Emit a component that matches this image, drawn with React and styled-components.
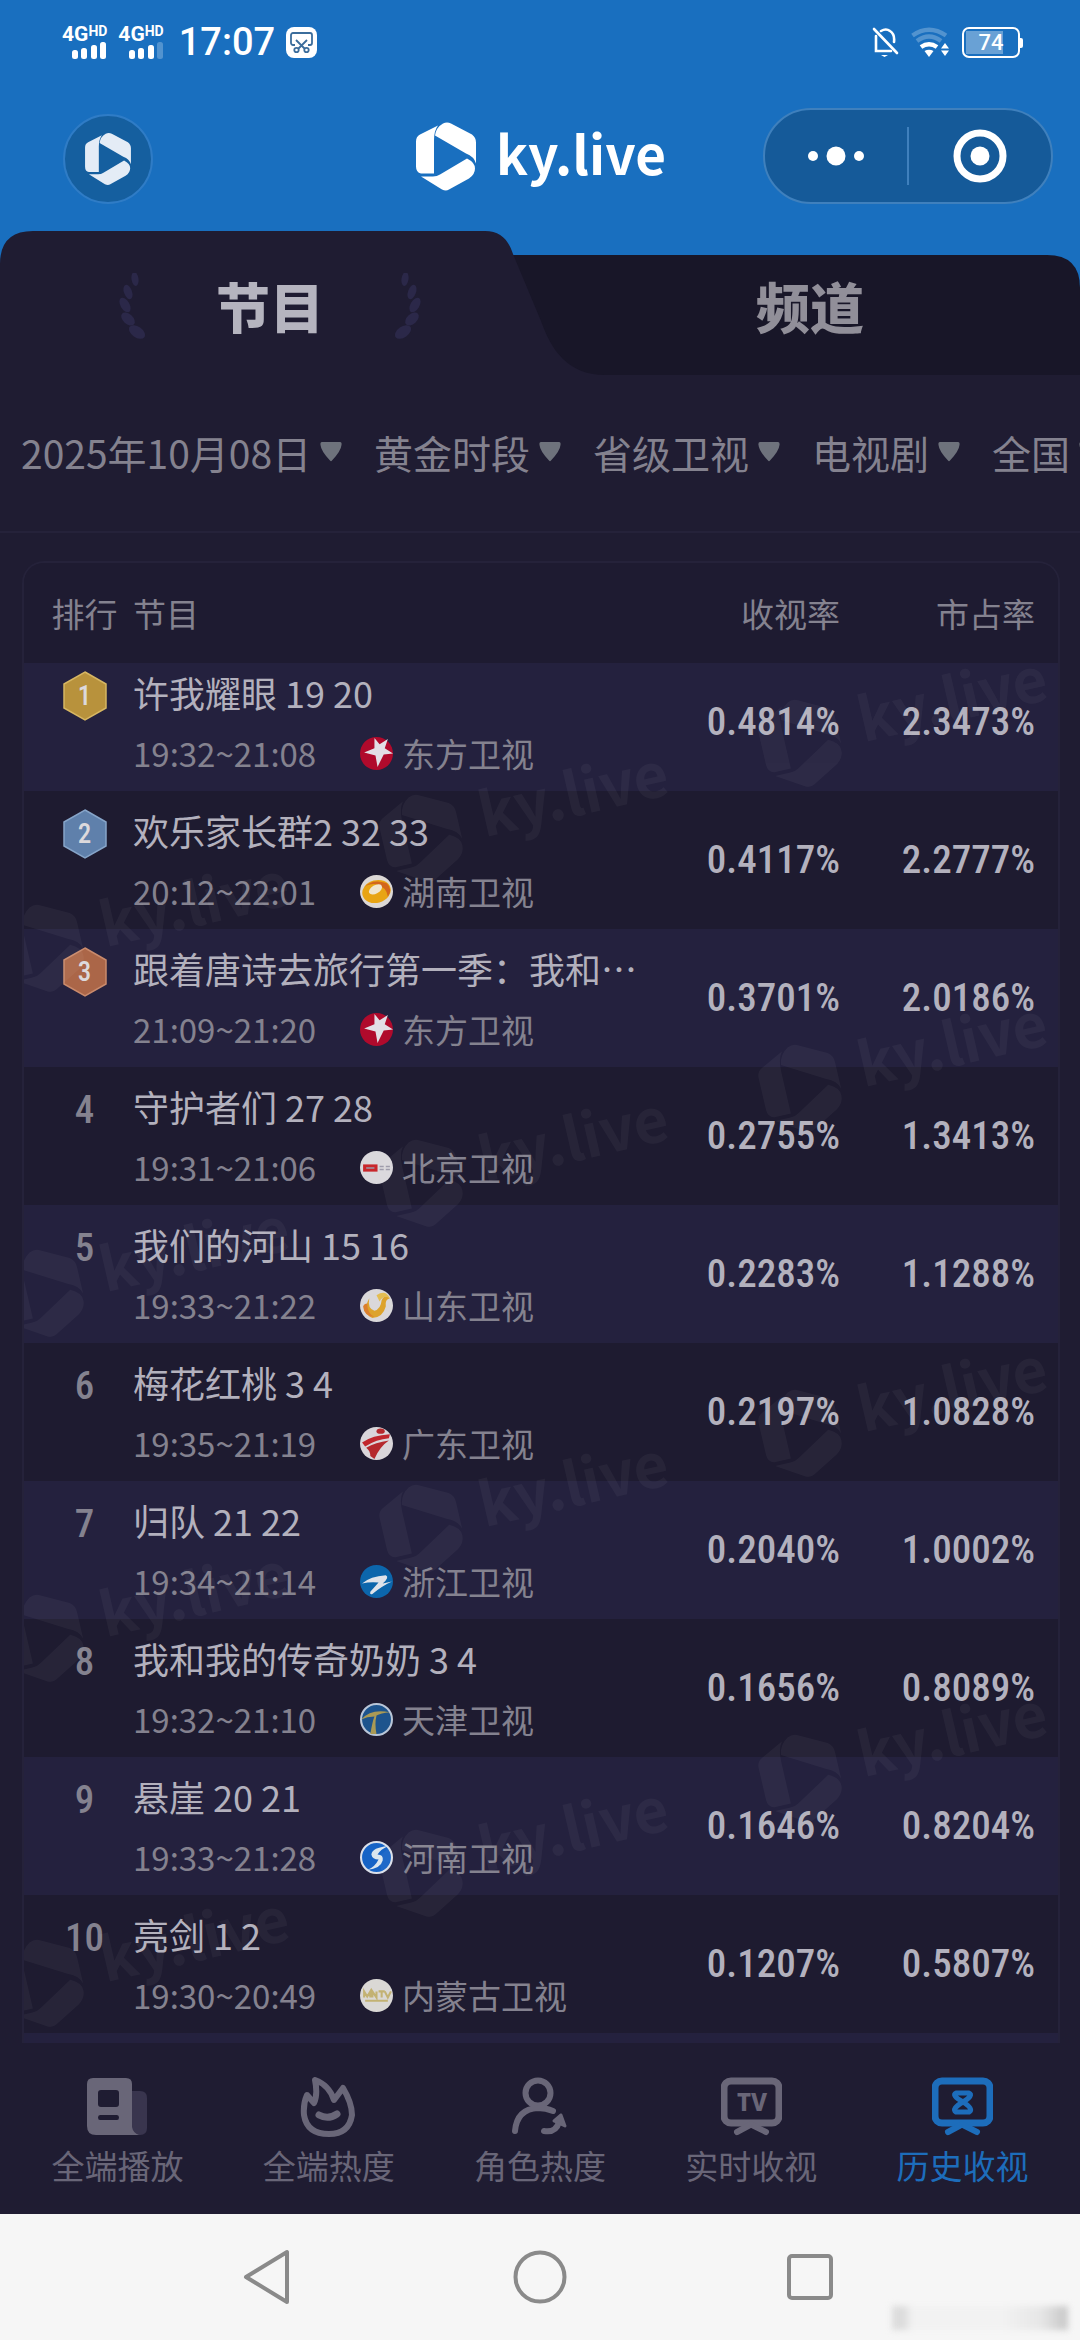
import React, { useLayoutEffect, useRef } from 'react';
import styled, { createGlobalStyle } from 'styled-components';

const GlobalStyle = createGlobalStyle`
  * {
    box-sizing: border-box;
  }

  body {
    margin: 0;
    background: #1f1c32;
    font-family: "Noto Sans CJK SC", sans-serif;
  }

  button, select {
    font: inherit;
    color: inherit;
    background: none;
    border: 0;
    margin: 0;
    padding: 0;
  }
`;

const shows = [
  { rank: 1, title: '许我耀眼 19 20', time: '19:32~21:08', station: '东方卫视', logo: 'dragon', rating: '0.4814%', share: '2.3473%' },
  { rank: 2, title: '欢乐家长群2 32 33', time: '20:12~22:01', station: '湖南卫视', logo: 'hunan', rating: '0.4117%', share: '2.2777%' },
  { rank: 3, title: '跟着唐诗去旅行第一季：我和…', time: '21:09~21:20', station: '东方卫视', logo: 'dragon', rating: '0.3701%', share: '2.0186%' },
  { rank: 4, title: '守护者们 27 28', time: '19:31~21:06', station: '北京卫视', logo: 'beijing', rating: '0.2755%', share: '1.3413%' },
  { rank: 5, title: '我们的河山 15 16', time: '19:33~21:22', station: '山东卫视', logo: 'shandong', rating: '0.2283%', share: '1.1288%' },
  { rank: 6, title: '梅花红桃 3 4', time: '19:35~21:19', station: '广东卫视', logo: 'guangdong', rating: '0.2197%', share: '1.0828%' },
  { rank: 7, title: '归队 21 22', time: '19:34~21:14', station: '浙江卫视', logo: 'zhejiang', rating: '0.2040%', share: '1.0002%' },
  { rank: 8, title: '我和我的传奇奶奶 3 4', time: '19:32~21:10', station: '天津卫视', logo: 'tianjin', rating: '0.1656%', share: '0.8089%' },
  { rank: 9, title: '悬崖 20 21', time: '19:33~21:28', station: '河南卫视', logo: 'henan', rating: '0.1646%', share: '0.8204%' },
  { rank: 10, title: '亮剑 1 2', time: '19:30~20:49', station: '内蒙古卫视', logo: 'neimenggu', rating: '0.1207%', share: '0.5807%' },
];

const filters = [
  { name: '日期', value: '2025年10月08日' },
  { name: '时段', value: '黄金时段' },
  { name: '频道组', value: '省级卫视' },
  { name: '类型', value: '电视剧' },
  { name: '地区', value: '全国' },
];

const medals = {
  1: { fill: '#b8923c', edge: '#d6b662' },
  2: { fill: '#5f80ab', edge: '#86a4c8' },
  3: { fill: '#ab6648', edge: '#c98a6c' },
};

/* ---------- drawings ---------- */

const LogoShape = () => (
  <>
    <path d="M0 19Q0 14 4 12L22 3Q18 8 18 18V51H5Q0 50 0 44Z" />
    <path d="M19 13Q20 5 27 1Q31 -1 35 1L56 12Q60 15 60 20V41Q58 34 50 31Z" />
    <path d="M51 36Q59 40 59 46Q59 52 53 56L33 67Q30 69 26 67L5 54H17Q21 54 24 52Z" />
  </>
);

const Logo = ({ width, height, color }) => (
  <svg width={width} height={height} viewBox="0 0 60 68" fill={color}>
    <LogoShape />
  </svg>
);

const SignalBars = ({ weak }) => (
  <svg width="36" height="17" viewBox="0 0 36 17" fill="#fff">
    <rect x="1" y="8" width="6" height="9" rx="2.5" />
    <rect x="10" y="6" width="6" height="11" rx="2.5" />
    <rect x="20" y="3" width="6" height="14" rx="2.5" />
    <rect x="29" y="0" width="6" height="17" rx="2.5" opacity={weak ? 0.25 : 1} />
  </svg>
);

const ScreenshotIcon = () => (
  <svg width="31" height="31" viewBox="0 0 31 31">
    <rect width="31" height="31" rx="8" fill="#fff" />
    <g fill="none" stroke="#3b6d9c" strokeWidth="1.8">
      <path d="M9 18H7a2 2 0 0 1-2-2V8a2 2 0 0 1 2-2h17a2 2 0 0 1 2 2v8a2 2 0 0 1-2 2h-2" />
      <path d="M10 13l9 9M21 13l-9 9" />
      <circle cx="10.5" cy="23" r="2.2" />
      <circle cx="20.5" cy="23" r="2.2" />
    </g>
  </svg>
);

const MutedBell = () => (
  <svg width="27" height="30" viewBox="0 0 27 30" fill="none" stroke="#fff" strokeWidth="2.6" strokeLinecap="round">
    <path d="M2 2L25 26" />
    <path d="M4 9V24H19" />
    <path d="M9 4Q14 1 18 4Q23 7 22 15" />
    <path d="M9 28H16L12.5 30Z" fill="#fff" stroke="none" />
  </svg>
);

const WifiIcon = () => (
  <svg width="39" height="30" viewBox="0 0 39 30" fill="none">
    <g stroke="#fff" strokeWidth="4.5">
      <path d="M1.5 8.5Q18 -3 35 8.5" opacity="0.25" />
      <path d="M6 14Q18 5 30 14" opacity="0.25" />
      <path d="M10 20Q18 14.5 26 20" />
    </g>
    <path d="M13.5 24Q18 21.5 22.5 24L18 30Z" fill="#fff" />
    <path d="M34 16L38 21.5H30ZM34 29L30 23.5H38Z" fill="#fff" />
  </svg>
);

const TabShape = () => (
  <TabBackdrop viewBox="0 0 1080 144" preserveAspectRatio="none">
    <path d="M400 24H1047Q1080 24 1080 57V144H400Z" fill="#181628" />
    <path d="M0 144V33Q0 0 33 0H485C500 0 508 8 513 23L541 90C551 118 567 144 605 144Z" fill="#1f1c32" />
  </TabBackdrop>
);

const Laurel = ({ flip }) => (
  <svg width="30" height="66" viewBox="0 0 30 66" fill="#2b2849">
    <g transform={flip ? 'translate(30 0) scale(-1 1)' : undefined}>
      <ellipse cx="17" cy="6" rx="3.5" ry="7" transform="rotate(-8 17 6)" />
      <ellipse cx="10" cy="19" rx="4" ry="7.5" transform="rotate(-20 10 19)" />
      <ellipse cx="7" cy="32" rx="4.5" ry="8" transform="rotate(-30 7 32)" />
      <ellipse cx="10" cy="46" rx="5" ry="8" transform="rotate(-48 10 46)" />
      <ellipse cx="19" cy="59" rx="5.5" ry="9" transform="rotate(-55 19 59)" />
    </g>
  </svg>
);

const Caret = () => (
  <svg width="22" height="20" viewBox="0 0 22 20">
    <path d="M2 0H20Q22 0 21.5 3Q21 9 12 18.5Q11 20 10 18.5Q1 9 .5 3Q0 0 2 0Z" fill="#6e727c" />
  </svg>
);

const Medal = ({ rank }) => (
  <MedalBox>
    <svg width="44" height="50" viewBox="0 0 44 50">
      <path d="M22 1L43 13V37L22 49L1 37V13Z" fill={medals[rank].fill} stroke={medals[rank].edge} strokeWidth="1.5" />
    </svg>
    <MedalNumber>{rank}</MedalNumber>
  </MedalBox>
);

const stationArt = {
  dragon: (
    <>
      <circle cx="16" cy="16" r="16" fill="#b00a2c" />
      <path d="M14 1L19 7L27 2L24 11L32 16L23 17L17 29L15 18L4 15L14 11Z" fill="#e2dfe6" />
    </>
  ),
  hunan: (
    <>
      <circle cx="16" cy="16" r="16" fill="#dcd8d6" />
      <ellipse cx="16" cy="16" rx="14" ry="11" fill="#e8a413" transform="rotate(-15 16 16)" />
      <path d="M4 12Q12 3 26 8Q32 14 27 21Q26 12 16 9Q9 8 4 12Z" fill="#d3661c" />
      <ellipse cx="15" cy="14" rx="7" ry="4" fill="#f0e6cf" transform="rotate(-30 15 14)" />
    </>
  ),
  beijing: (
    <>
      <circle cx="16" cy="16" r="16" fill="#dad8dc" />
      <rect x="3" y="13" width="14" height="7" fill="#c9262b" />
      <path d="M6 16.5h8M19 15h4M19 18h4M25 15h4M25 18h4" stroke="#9a98a8" strokeWidth="1.5" />
    </>
  ),
  shandong: (
    <>
      <circle cx="16" cy="16" r="16" fill="#dad8da" />
      <path d="M9 9Q7 19 14 21Q20 20 21 11Q24 4 29 9Q24 10 25 17Q22 28 12 28Q1 24 9 9Z" fill="#dda32c" />
      <path d="M3 17Q4 27 14 27Q7 24 7 14Q4 14 3 17Z" fill="#dc7f2c" />
      <path d="M16 6Q25 0 29 9Q23 5 19 12Z" fill="#e3bd52" />
    </>
  ),
  guangdong: (
    <>
      <circle cx="16" cy="16" r="16" fill="#dad6da" />
      <ellipse cx="20" cy="4" rx="4" ry="2.5" fill="#b5292d" />
      <path d="M2 15Q12 8 29 7L28 11Q16 12 5 19Z" fill="#c1272d" />
      <path d="M6 20Q15 15 28 13Q19 19 14 31L10 28Q10 23 6 20Z" fill="#b5292d" />
    </>
  ),
  zhejiang: (
    <>
      <circle cx="16" cy="16" r="16" fill="#0c66ac" />
      <path d="M2 18Q10 11 25 10Q29 12 22 18L31 16Q22 20 12 28Q9 29 10 26L18 17Q10 16 2 18Z" fill="#dfe3ea" />
    </>
  ),
  tianjin: (
    <>
      <circle cx="16" cy="16" r="15" fill="#1d548d" stroke="#b9c6d8" strokeWidth="2" />
      <path d="M1 16Q11 5 29 9Q20 10 16 12Q14 20 16 30H10Q12 18 14 13Q7 13 1 16Z" fill="#a99a55" />
    </>
  ),
  henan: (
    <>
      <circle cx="16" cy="16" r="15" fill="#1663c6" stroke="#dbe0ea" strokeWidth="2" />
      <path d="M27 5Q12 6 11 13Q12 18 18 18Q14 26 7 28Q20 27 22 19Q23 13 17 13Q20 8 27 5Z" fill="#dbe6ee" />
    </>
  ),
  neimenggu: (
    <>
      <circle cx="16" cy="16" r="16" fill="#dad8d5" />
      <path d="M4 18V12L7 17L10 12V18M12 18V12L16 18V12M18 12H24M21 12V18M24 12L27 18L30 12M5 21H27" fill="none" stroke="#c3b273" strokeWidth="2" />
    </>
  ),
};

const StationLogo = ({ name }) => (
  <svg width="33" height="33" viewBox="0 0 32 32">{stationArt[name]}</svg>
);

const TvFrame = ({ children }) => (
  <>
    <rect x="3" y="4" width="55" height="42" rx="7" fill="none" stroke="currentColor" strokeWidth="7" />
    <path d="M29 48L16 55M31 48L45 55" stroke="currentColor" strokeWidth="6" strokeLinecap="round" />
    {children}
  </>
);

const tabs = [
  {
    label: '全端播放',
    art: (
      <>
        <path d="M44 14H53Q60 14 60 21V51Q60 58 53 58H44Z" fill="#39354e" />
        <path fillRule="evenodd" fill="currentColor" d="M6 1H39Q45 1 45 7V50Q46 56 52 58H9Q0 58 0 49V7Q0 1 6 1ZM14 13Q11 13 11 16V27Q11 30 14 30H29Q32 30 32 27V16Q32 13 29 13ZM13 38Q11 38 11 40.5Q11 43 13 43H30Q32 43 32 40.5Q32 38 30 38Z" />
      </>
    ),
  },
  {
    label: '全端热度',
    art: (
      <g fill="none" stroke="currentColor" strokeWidth="6" strokeLinecap="round" strokeLinejoin="round">
        <path d="M9 18L16 26Q20 18 17 3Q31 8 36 23L45 11Q54 26 54 38Q51 57 31 57Q9 57 6 38Q5 27 9 18Z" />
        <path d="M21 38Q30 43 39 37" strokeWidth="7" />
      </g>
    ),
  },
  {
    label: '角色热度',
    art: (
      <g fill="none" stroke="currentColor" strokeWidth="6" strokeLinecap="round">
        <circle cx="28" cy="16" r="12.5" />
        <path d="M5 54Q7 32 28 31Q36 31 43 34" />
        <path d="M34 54Q46 56 49 45" />
        <path d="M51 38L44 44L55 49Z" fill="currentColor" strokeWidth="3" strokeLinejoin="round" />
      </g>
    ),
  },
  {
    label: '实时收视',
    art: (
      <TvFrame>
        <text x="31" y="34" textAnchor="middle" fontFamily="Noto Sans" fontSize="24" fontWeight="800" fill="currentColor">TV</text>
      </TvFrame>
    ),
  },
  {
    label: '历史收视',
    active: true,
    art: (
      <TvFrame>
        <path d="M24 16H37Q42 18 31 25Q19 32 24 35H37Q42 32 31 25Q19 18 24 16Z" fill="none" stroke="currentColor" strokeWidth="5" strokeLinejoin="round" />
      </TvFrame>
    ),
  },
];

const marks = [0, 345, 690, 1035].flatMap((dy) => [
  { x: 778, y: 80 + dy },
  { x: 399, y: 175 + dy },
  { x: 20, y: 285 + dy },
]);

const Watermarks = () => (
  <WatermarkLayer>
    {marks.map(({ x, y }) => (
      <g key={`${x}-${y}`} transform={`translate(${x} ${y}) rotate(-13)`}>
        <g transform="translate(-40 -44) scale(1.3)">
          <LogoShape />
        </g>
        <text x="60" y="13" fontSize="60" fontWeight="700">ky.live</text>
      </g>
    ))}
  </WatermarkLayer>
);

/* ---------- app ---------- */

const App = () => {
  const listRef = useRef(null);

  // The list opens slightly scrolled under its sticky header
  useLayoutEffect(() => {
    listRef.current.scrollTop = 10;
  }, []);

  return (
    <Screen>
      <GlobalStyle />
      <StatusBar>
        <StatusGroup $gap={11}>
          <Signal>
            <Network>4G<sup>HD</sup></Network>
            <SignalBars />
          </Signal>
          <Signal>
            <Network>4G<sup>HD</sup></Network>
            <SignalBars weak />
          </Signal>
          <Clock>17:07</Clock>
          <ScreenshotIcon />
        </StatusGroup>
        <StatusGroup $gap={12}>
          <MutedBell />
          <WifiIcon />
          <Battery><span>74</span></Battery>
        </StatusGroup>
      </StatusBar>

      <Header>
        <HomeButton aria-label="首页">
          <Logo width={46} height={52} color="#e4ecf6" />
        </HomeButton>
        <Brand>
          <Logo width={60} height={69} color="#fff" />
          <BrandName>ky.live</BrandName>
        </Brand>
        <Capsule>
          <CapsuleButton aria-label="更多">
            <svg width="58" height="20" viewBox="0 0 58 20" fill="#fff">
              <circle cx="6" cy="10" r="5" />
              <circle cx="29" cy="10" r="9.5" />
              <circle cx="52" cy="10" r="5" />
            </svg>
          </CapsuleButton>
          <CapsuleDivider />
          <CapsuleButton aria-label="关闭">
            <svg width="54" height="54" viewBox="0 0 54 54">
              <circle cx="27" cy="27" r="23" fill="none" stroke="#fff" strokeWidth="7" />
              <circle cx="27" cy="27" r="9.5" fill="#fff" />
            </svg>
          </CapsuleButton>
        </Capsule>
      </Header>

      <TabBar>
        <TabShape />
        <TabButton $active>
          <Laurel />
          节目
          <Laurel flip />
        </TabButton>
        <TabButton>频道</TabButton>
      </TabBar>

      <Filters>
        {filters.map(({ name, value }) => (
          <Filter key={name}>
            <select aria-label={name} defaultValue={value}>
              <option>{value}</option>
            </select>
            <Caret />
          </Filter>
        ))}
      </Filters>

      <Card>
        <List ref={listRef}>
          <Table>
            <colgroup>
              <col width="109" />
              <col />
              <col width="180" />
              <col width="218" />
            </colgroup>
            <thead>
              <tr>
                <HeadCell $align="center">排行</HeadCell>
                <HeadCell>节目</HeadCell>
                <HeadCell $align="right">收视率</HeadCell>
                <HeadCell $align="right">市占率</HeadCell>
              </tr>
            </thead>
            <tbody>
              {shows.map((show) => (
                <Row key={show.rank}>
                  <RankCell>
                    {medals[show.rank] ? <Medal rank={show.rank} /> : show.rank}
                  </RankCell>
                  <ShowCell>
                    <Title>{show.title}</Title>
                    <Meta>
                      <Time>{show.time}</Time>
                      <StationLogo name={show.logo} />
                      {show.station}
                    </Meta>
                  </ShowCell>
                  <ValueCell>{show.rating}</ValueCell>
                  <ValueCell>{show.share}</ValueCell>
                </Row>
              ))}
              <Row>
                <td colSpan={4} />
              </Row>
            </tbody>
          </Table>
        </List>
        <Watermarks />
      </Card>

      <BottomTabs>
        {tabs.map(({ label, art, active }) => (
          <BottomTab key={label} $active={active}>
            <svg width="61" height="60" viewBox="0 0 61 60">{art}</svg>
            {label}
          </BottomTab>
        ))}
      </BottomTabs>

      <SystemNav>
        <button aria-label="返回">
          <svg width="54" height="56" viewBox="0 0 54 56" fill="none" stroke="#8a8a8a" strokeWidth="4" strokeLinejoin="round">
            <path d="M44 3V53L3 28Z" />
          </svg>
        </button>
        <button aria-label="主页">
          <svg width="54" height="54" viewBox="0 0 54 54" fill="none" stroke="#8a8a8a" strokeWidth="4">
            <circle cx="27" cy="27" r="24.5" />
          </svg>
        </button>
        <button aria-label="最近任务">
          <svg width="46" height="46" viewBox="0 0 46 46" fill="none" stroke="#8a8a8a" strokeWidth="4">
            <rect x="2" y="2" width="42" height="42" rx="3" />
          </svg>
        </button>
        <Smudge />
      </SystemNav>
    </Screen>
  );
};

const Screen = styled.div`
  display: flex;
  flex-direction: column;
  height: 100vh;
  overflow: hidden;
  background: #1f1c32;
  color: #b3b1bd;
`;

const StatusBar = styled.div`
  display: flex;
  justify-content: space-between;
  align-items: center;
  height: 84px;
  padding: 0 60px 0 62px;
  background: #196fbf;
  color: #fff;
  font-family: Roboto, sans-serif;
`;

const StatusGroup = styled.div`
  display: flex;
  align-items: center;
  gap: ${(p) => p.$gap}px;
`;

const Signal = styled.div`
  display: flex;
  flex-direction: column;
  align-items: flex-end;
`;

const Network = styled.div`
  display: flex;
  font-size: 21px;
  font-weight: 700;
  line-height: 16px;

  sup {
    font-size: 14px;
    line-height: 11px;
  }
`;

const Clock = styled.div`
  padding-left: 4px;
  font-size: 38px;
  font-weight: 500;
  line-height: 40px;
`;

const Battery = styled.div`
  position: relative;
  width: 58px;
  height: 31px;
  padding: 2px;
  border: 2px solid #fff;
  border-radius: 7px;
  font-size: 22px;
  font-weight: 500;
  line-height: 24px;
  text-align: center;

  span {
    display: block;
    height: 23px;
    background: linear-gradient(90deg, rgba(255, 255, 255, 0.35) 74%, transparent 74%);
  }

  &::after {
    content: "";
    position: absolute;
    top: 9px;
    right: -5px;
    width: 3px;
    height: 10px;
    border-radius: 0 2px 2px 0;
    background: #fff;
  }
`;

const Header = styled.header`
  display: grid;
  grid-template-columns: 1fr auto 1fr;
  align-items: center;
  height: 147px;
  padding: 0 27px 3px 63px;
  background: #196fbf;
`;

const HomeButton = styled.button`
  display: flex;
  align-items: center;
  justify-content: center;
  width: 90px;
  height: 90px;
  margin-top: 6px;
  border: 2px solid #2f7cc6;
  border-radius: 50%;
  background: #155f9f;
`;

const Brand = styled.div`
  display: flex;
  align-items: center;
  gap: 20px;
  /* evens out the unequal page gutters */
  margin-right: 34px;
`;

const BrandName = styled.span`
  padding-bottom: 8px;
  color: #fff;
  font-size: 53px;
  font-weight: 700;
  line-height: 64px;
`;

const Capsule = styled.div`
  display: flex;
  align-items: center;
  justify-self: end;
  width: 290px;
  height: 96px;
  border: 2px solid #3f80bd;
  border-radius: 48px;
  background: #155a99;
`;

const CapsuleButton = styled.button`
  flex: 1;
  display: flex;
  align-items: center;
  justify-content: center;
`;

const CapsuleDivider = styled.span`
  width: 2px;
  height: 58px;
  background: #3f80bd;
`;

const TabBar = styled.nav`
  position: relative;
  display: flex;
  height: 144px;
  background: linear-gradient(#196fbf 50%, transparent 50%);
`;

const TabBackdrop = styled.svg`
  position: absolute;
  inset: 0;
  width: 100%;
  height: 100%;
`;

const TabButton = styled.button`
  position: relative;
  flex: 1;
  display: flex;
  align-items: center;
  justify-content: center;
  gap: 68px;
  padding-top: 6px;
  color: ${(p) => (p.$active ? '#b5b4bf' : '#918f99')};
  font-size: 54px;
  font-weight: 900;
  line-height: 64px;
`;

const Filters = styled.div`
  display: flex;
  align-items: center;
  gap: 32px;
  height: 158px;
  padding: 0 0 2px 21px;
  border-bottom: 2px solid #25223a;
  overflow: hidden;
`;

const Filter = styled.label`
  flex: none;
  display: flex;
  align-items: center;
  gap: 8px;
  color: #84828f;
  font-size: 39px;
  line-height: 56px;

  select {
    appearance: none;
    outline: none;
  }
`;

const Card = styled.section`
  position: relative;
  flex: 1;
  min-height: 0;
  margin: 28px 20px 0 22px;
  border: 2px solid #25223a;
  border-bottom: 0;
  border-radius: 22px 22px 0 0;
  overflow: hidden;
`;

const List = styled.div`
  height: 100%;
  overflow-y: auto;
  scrollbar-width: none;
`;

const WatermarkLayer = styled.svg`
  position: absolute;
  top: 100px;
  left: 0;
  width: 100%;
  height: calc(100% - 100px);
  fill: #fff;
  opacity: 0.04;
  pointer-events: none;
`;

const Table = styled.table`
  width: 100%;
  table-layout: fixed;
  border-collapse: collapse;

  td, th {
    padding: 0;
  }
`;

const HeadCell = styled.th`
  position: sticky;
  top: 0;
  z-index: 1;
  height: 100px;
  background: #1e1b31;
  color: #84828f;
  font-size: 33px;
  font-weight: 400;
  line-height: 48px;
  text-align: ${(p) => p.$align || 'left'};

  &&:first-child {
    padding-left: 12px;
  }

  &&:last-child {
    padding-right: 23px;
  }
`;

const Row = styled.tr`
  height: 138px;
  background: #1e1b30;

  &:nth-child(odd) {
    background: #24213e;
  }
`;

const RankCell = styled.td`
  vertical-align: top;
  text-align: center;
  color: #84828f;
  font-family: "Roboto Condensed", Roboto, sans-serif;
  font-size: 39px;
  font-weight: 500;
  line-height: 50px;

  && {
    padding: 18px 0 0 12px;
  }
`;

const MedalBox = styled.div`
  display: grid;
  place-items: center;

  > * {
    grid-area: 1 / 1;
  }
`;

const MedalNumber = styled.span`
  color: #dcd9dc;
  font-size: 27px;
  line-height: 50px;
`;

const ShowCell = styled.td`
  vertical-align: top;

  && {
    padding-top: 14px;
  }
`;

const Title = styled.div`
  font-size: 36px;
  line-height: 50px;
  white-space: nowrap;
`;

const Meta = styled.div`
  display: flex;
  align-items: center;
  gap: 9px;
  margin-top: 16px;
  color: #84828f;
  font-size: 33px;
  line-height: 40px;
  white-space: nowrap;
`;

const Time = styled.span`
  width: 218px;
`;

const ValueCell = styled.td`
  vertical-align: middle;
  text-align: right;
  font-family: "Roboto Condensed", Roboto, sans-serif;
  font-size: 39px;
  font-weight: 500;
  line-height: 48px;

  &&:last-child {
    padding-right: 23px;
  }
`;

const BottomTabs = styled.nav`
  display: flex;
  height: 171px;
  padding: 0 12px;
  background: #1f1c32;
`;

const BottomTab = styled.button`
  flex: 1;
  display: flex;
  flex-direction: column;
  align-items: center;
  gap: 4px;
  padding-top: 34px;
  color: ${(p) => (p.$active ? '#1d6dbb' : '#696678')};
  font-size: 33px;
  line-height: 48px;
`;

const SystemNav = styled.div`
  position: relative;
  display: flex;
  align-items: center;
  justify-content: center;
  height: 126px;
  background: #f6f6f6;

  button {
    display: flex;
    justify-content: center;
    width: 270px;
  }
`;

const Smudge = styled.span`
  position: absolute;
  right: 12px;
  bottom: 10px;
  width: 176px;
  height: 24px;
  background: linear-gradient(90deg, #dcdcdc 0 12px, #f2f2f2 20px 110px, #e6e6e6 150px, #cacaca 172px);
  filter: blur(3px);
`;

export default App;
